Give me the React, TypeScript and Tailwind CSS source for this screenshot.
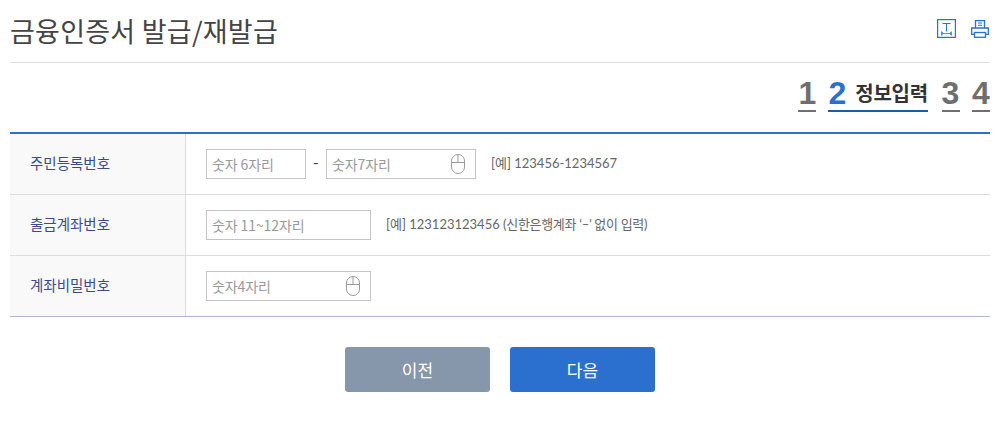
import React from 'react';

const font = { fontFamily: '"Noto Sans CJK KR", "Noto Sans", sans-serif' };
const hintFont = { fontFamily: 'Lato, "Noto Sans CJK KR", sans-serif' };
const numFont = { fontFamily: '"Liberation Sans", sans-serif' };

function MouseIcon() {
  return (
    <svg width="14" height="20" viewBox="0 0 14 20" fill="none" stroke="#9a9a9a" strokeWidth="1">
      <rect x="0.5" y="0.5" width="13" height="19" rx="6.5" />
      <path d="M0.5 8.500h13M7 0.500v8" />
    </svg>
  );
}

function FontSizeIcon() {
  return (
    <svg width="19" height="19" viewBox="0 0 19 19" fill="none" stroke="#2b70cf" strokeWidth="1">
      <rect x="0.600" y="0.600" width="17.800" height="17.800" strokeWidth="1.200" />
      <path d="M5.500 4.500h8M9.500 4.500v8" />
      <path d="M4 14.500h11M6 13l-2 1.500 2 1.500M13 13l2 1.500-2 1.500M4.500 12.500v4M14.500 12.500v4" stroke="#4f8fdd" />
    </svg>
  );
}

function PrintIcon() {
  return (
    <svg width="18" height="18" viewBox="0 0 18 18" fill="none" stroke="#2b70cf" strokeWidth="1.300">
      <path d="M4.500 8V0.700h9V8" />
      <path d="M3 14.400H0.700V8h16.600v6.400H15" />
      <rect x="3.500" y="12.500" width="11" height="4.800" />
      <path d="M7 3h4M7 5.300h4" strokeWidth="1" />
    </svg>
  );
}

function Field({ placeholder, width, mouse }: { placeholder: string; width: string; mouse?: boolean }) {
  return (
    <div className={`flex items-center justify-between h-[30px] border border-[#c4c4c4] pl-[5px] pr-[10px] text-[14px] text-[#999] ${width}`}>
      <span className="tracking-[-0.1px]">{placeholder}</span>
      {mouse && <MouseIcon />}
    </div>
  );
}

function Row({ label, last, children }: { label: string; last?: boolean; children: React.ReactNode }) {
  return (
    <div className={`flex h-[61px] border-b ${last ? 'border-[#b4bad2]' : 'border-[#dcdcdc]'}`}>
      <div className="w-[176px] shrink-0 bg-[#f9f9f9] border-r border-[#dcdcdc] pl-5 flex items-center text-[14.500px] text-[#3d4a8a] pb-[3px]">
        {label}
      </div>
      <div className="flex items-center pl-5">{children}</div>
    </div>
  );
}

function StepNum({ n }: { n: string }) {
  return (
    <span className="border-b-2 border-[#6e6e6e] text-[32px] leading-[32px] font-bold text-[#6e6e6e] h-[35px] text-center min-w-[18px]" style={numFont}>
      {n}
    </span>
  );
}

export default function App() {
  return (
    <div className="w-[1000px] h-[421px] bg-white px-[10px] overflow-hidden" style={font}>
      <div className="flex items-center justify-between h-[63px] border-b border-[#dcdcdc] pb-[1px]">
        <h1 className="text-[27px] tracking-[0.25px] leading-[40px] text-[#444]">금융인증서 발급/재발급</h1>
        <div className="flex items-start gap-[15px] pb-[5px] pr-px">
          <FontSizeIcon />
          <div className="pt-px flex">
            <PrintIcon />
          </div>
        </div>
      </div>

      <div className="flex justify-end items-start gap-[12px] pt-[14px] h-[69px]">
        <StepNum n="1" />
        <div className="flex items-start border-b-2 border-[#1c5cab] h-[35px] gap-[9px] mr-px">
          <span className="text-[32px] leading-[32px] font-bold text-[#2b70cf]" style={numFont}>2</span>
          <span className="text-[20px] tracking-[-0.200px] leading-[32px] font-bold text-[#333]">정보입력</span>
        </div>
        <div className="flex w-[19px] justify-center">
          <StepNum n="3" />
        </div>
        <StepNum n="4" />
      </div>

      <div className="border-t-2 border-[#2b70cf]">
        <Row label="주민등록번호">
          <Field placeholder="숫자 6자리" width="w-[100px]" />
          <span className="mx-[7px] w-[6px] text-[16px] text-[#444] -mt-[6px]">-</span>
          <Field placeholder="숫자7자리" width="w-[150px]" mouse />
          <span className="ml-[15px] text-[13px] text-[#666]" style={hintFont}>[예] 123456-1234567</span>
        </Row>
        <Row label="출금계좌번호">
          <Field placeholder="숫자 11~12자리" width="w-[165px]" />
          <span className="ml-[15px] text-[13px] text-[#666]" style={hintFont}>
            [예] 123123123456 <span className="tracking-[-0.3px]">(신한은행계좌 ‘–’ 없이 입력)</span>
          </span>
        </Row>
        <Row label="계좌비밀번호" last>
          <Field placeholder="숫자4자리" width="w-[165px]" mouse />
        </Row>
      </div>

      <div className="flex justify-center gap-5 pt-[30px]">
        <button className="w-[145px] h-[45px] rounded-[3px] bg-[#8696ab] text-white text-[17px]">이전</button>
        <button className="w-[145px] h-[45px] rounded-[3px] bg-[#2b70cf] text-white text-[17px]">다음</button>
      </div>
    </div>
  );
}
